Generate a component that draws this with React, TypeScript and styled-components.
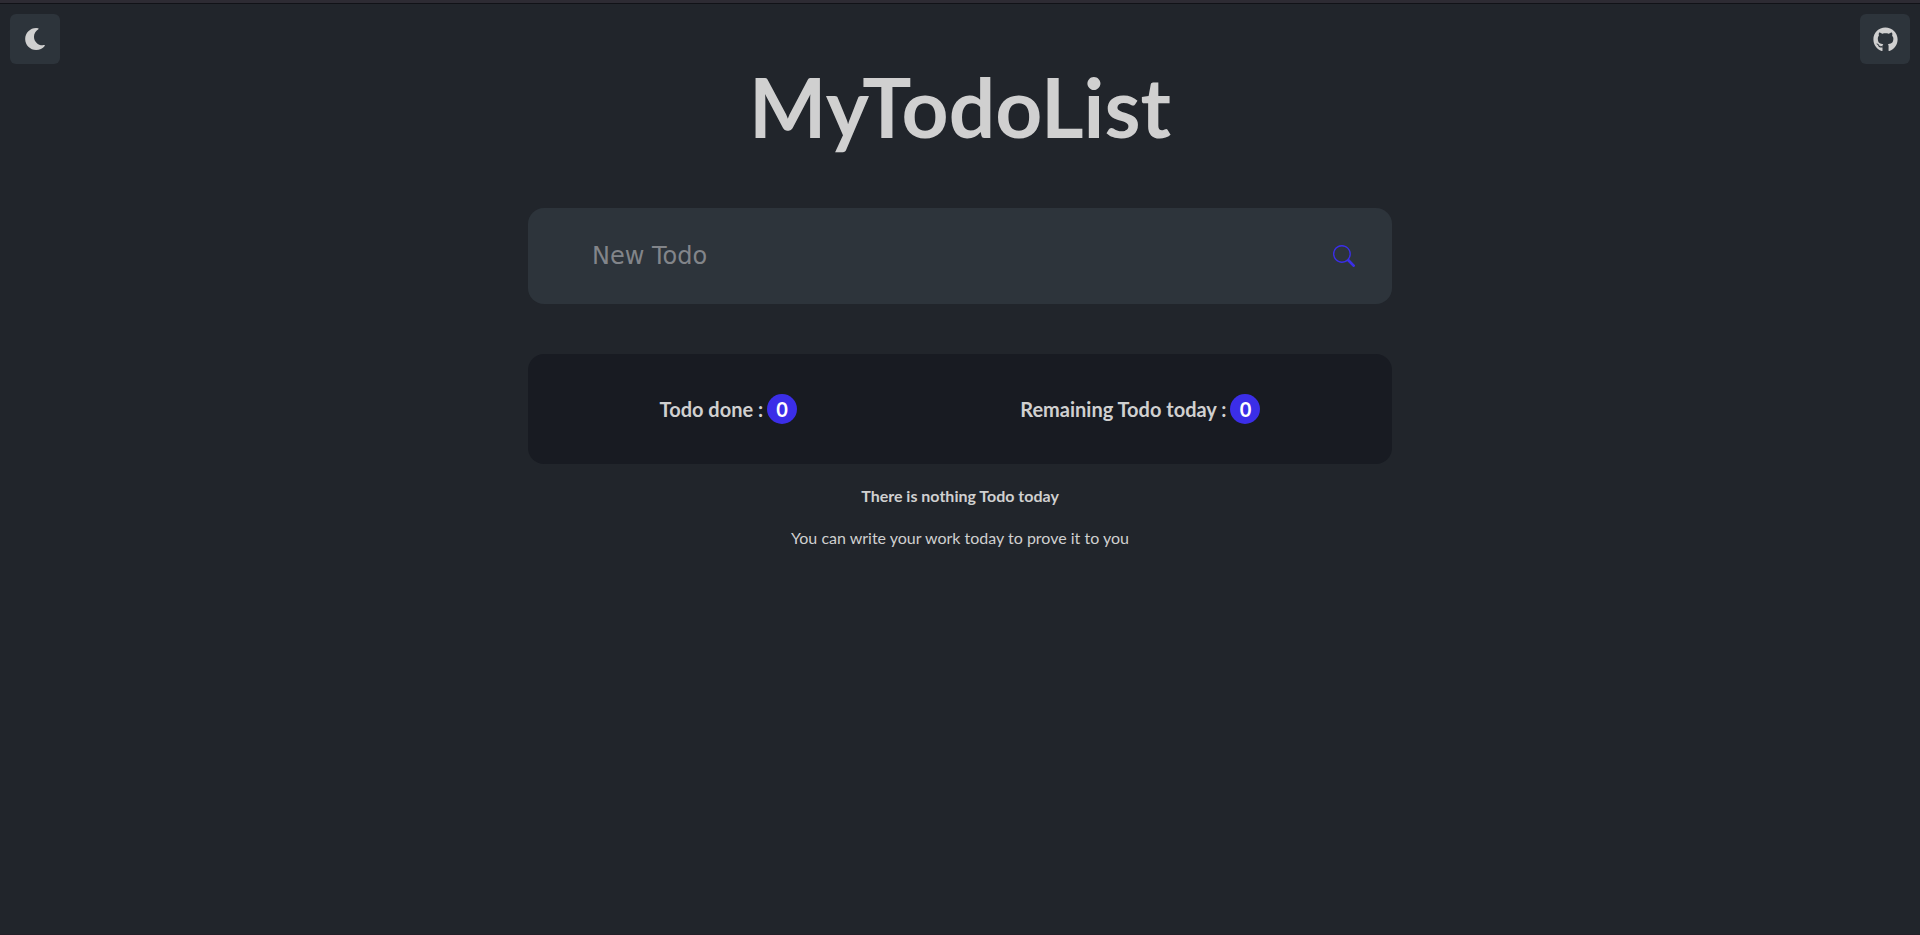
import React, { useState } from "react";
import styled, { createGlobalStyle } from "styled-components";
import { FaMoon, FaGithub } from "react-icons/fa";
import { BsSearch } from "react-icons/bs";

const GlobalStyle = createGlobalStyle`
  *, *::before, *::after { box-sizing: border-box; }
  body {
    margin: 0;
    background: #21252b;
    color: #d0d0d0;
    font-family: Lato, "Liberation Sans", sans-serif;
    font-size: 16px;
  }
`;

const Page = styled.div`
  display: flex;
  flex-direction: column;
  min-height: 100vh;
  border-top: 3px solid #2d2b33;
  border-bottom: 1px solid #231f28;
`;

const Edge = styled.div`
  height: 1px;
  background: #111217;
`;

const TopBar = styled.header`
  display: flex;
  justify-content: space-between;
  padding: 10px 10px 0;

  button,
  a {
    display: flex;
    align-items: center;
    justify-content: center;
    width: 50px;
    height: 50px;
    padding: 0;
    border: 0;
    border-radius: 6px;
    background: #2d343b;
    color: #d0d0d0;
    cursor: pointer;
  }
`;

const Main = styled.main`
  display: flex;
  flex-direction: column;
  align-items: center;
  text-align: center;
`;

const Title = styled.h1`
  margin: 0 0 60px;
  font-size: 82px;
  line-height: 84px;
  font-weight: 700;
`;

const TodoForm = styled.form`
  display: flex;
  align-items: center;
  width: 45%;
  height: 96px;
  margin-bottom: 50px;
  padding: 0 37px 0 64px;
  border-radius: 16px;
  background: #2d343b;
`;

const TodoInput = styled.input`
  flex: 1;
  min-width: 0;
  height: 64px;
  padding: 0;
  border: 0;
  outline: 0;
  background: transparent;
  color: #d0d0d0;
  font-family: "DejaVu Sans", sans-serif;
  font-size: 24px;

  &::placeholder {
    color: #82858a;
    opacity: 1;
  }
`;

const SearchButton = styled.button`
  display: flex;
  padding: 0;
  border: 0;
  background: transparent;
  color: #3b2ee8;
  cursor: pointer;
`;

const Stats = styled.section`
  display: flex;
  align-items: center;
  justify-content: space-around;
  width: 45%;
  height: 110px;
  margin-bottom: 20px;
  padding: 0 20px;
  border-radius: 16px;
  background: #181b22;
`;

const Stat = styled.p`
  display: flex;
  align-items: center;
  gap: 4px;
  margin: 0;
  font-size: 20px;
  line-height: 30px;
  font-weight: 700;
`;

const Count = styled.span`
  width: 30px;
  height: 30px;
  border-radius: 50%;
  background: #3b2ee8;
  color: #fff;
  text-align: center;
`;

const Message = styled.p<{ $strong?: boolean }>`
  margin: 0 0 18px;
  line-height: 24px;
  font-weight: ${({ $strong }) => ($strong ? 700 : 400)};
`;

export default function App() {
  const [todo, setTodo] = useState("");
  return (
    <Page>
      <GlobalStyle />
      <Edge />
      <TopBar>
        <button type="button" aria-label="Toggle dark mode">
          <FaMoon size={22} />
        </button>
        <a href="#github" aria-label="GitHub">
          <FaGithub size={25} />
        </a>
      </TopBar>
      <Main>
        <Title>MyTodoList</Title>
        <TodoForm onSubmit={(event) => event.preventDefault()}>
          <TodoInput
            aria-label="New Todo"
            placeholder="New Todo"
            value={todo}
            onChange={(event) => setTodo(event.target.value)}
          />
          <SearchButton type="submit" aria-label="Search">
            <BsSearch size={22} />
          </SearchButton>
        </TodoForm>
        <Stats>
          <Stat>
            Todo done : <Count>0</Count>
          </Stat>
          <Stat>
            Remaining Todo today : <Count>0</Count>
          </Stat>
        </Stats>
        <Message $strong>There is nothing Todo today</Message>
        <Message>You can write your work today to prove it to you</Message>
      </Main>
    </Page>
  );
}
